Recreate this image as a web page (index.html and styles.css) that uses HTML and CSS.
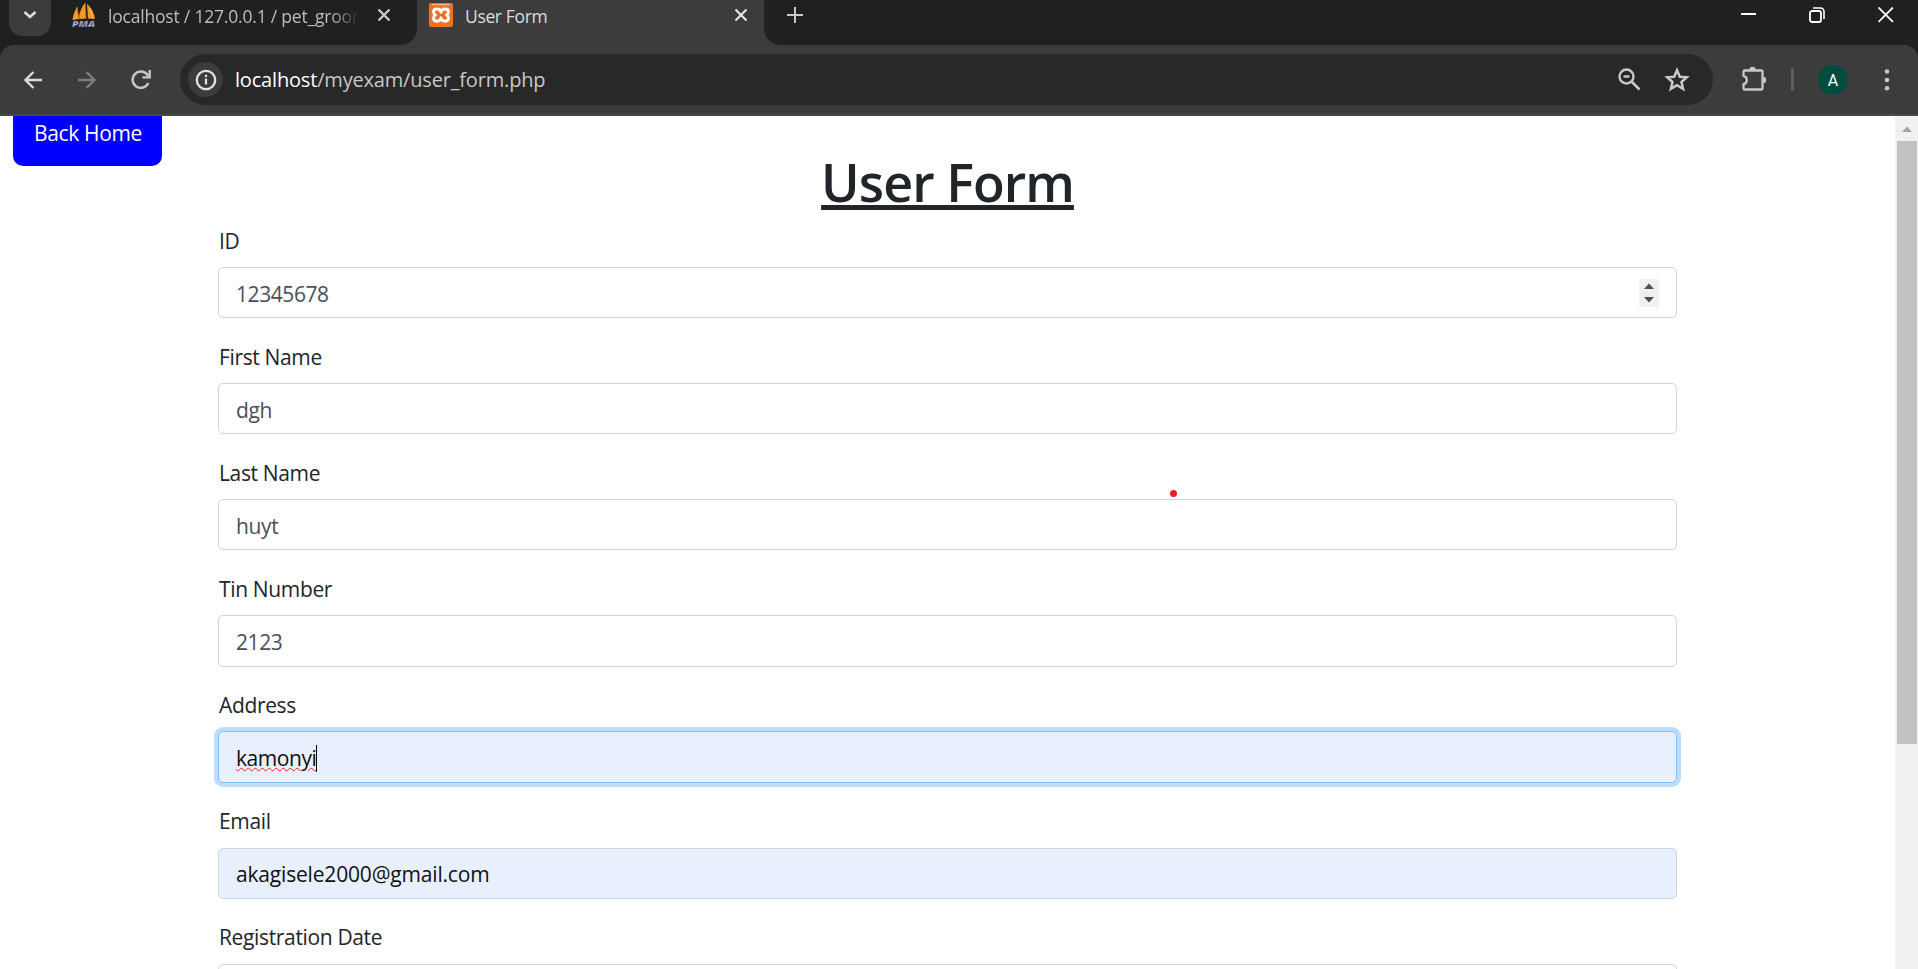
FILE: index.html
```html
<!DOCTYPE html>
<html lang="en">
<head>
<meta charset="utf-8">
<title>User Form</title>
<link rel="stylesheet" href="styles.css">
</head>
<body>
<div class="browser">
  <header class="tab-strip">
    <div class="tab-search"><svg width="42" height="36" viewBox="0 0 42 36"><path d="M15.500 12l5.500 5 5.500-5" fill="none" stroke="#dedede" stroke-width="2.600"/></svg></div>
    <div class="tab">
      <svg class="favicon" width="24" height="25" viewBox="0 0 24 25">
        <path d="M5 4C2.500 8 1 12 .5 17l6.500-1zM13 0C9 5 7 10 7 16l7-.5zM15 1c5 4 7 9 8 15l-7-.5z" fill="#f59a24"/>
        <path d="M5 4l2 12M13 0l1 15.500" stroke="#c96c12" stroke-width="1" fill="none"/>
        <path d="M18 5.500l3 9" stroke="#f9c069" stroke-width="1"/>
        <text x="0" y="23.500" class="pma" textLength="23" lengthAdjust="spacingAndGlyphs">PMA</text>
      </svg>
      <span class="tab-title tab-title-long">localhost / 127.0.0.1 / pet_groor</span>
      <svg class="tab-close" width="14" height="14" viewBox="0 0 14 14"><path d="M1.500 1.500l11 11M12.500 1.500l-11 11" stroke="#d0d0d0" stroke-width="2.200"/></svg>
    </div>
    <div class="tab tab-active">
      <svg class="favicon" width="24" height="24" viewBox="0 0 24 24">
        <rect width="24" height="24" rx="2" fill="#f27022"/><path d="M3 1.600h18" stroke="#fbb98a" stroke-width="1.200"/>
        <path d="M12 9.300C11.500 7 10 6 8 6S4.500 7.200 4.500 9c0 1.500.8 2.400 1.900 3-1.100.6-1.900 1.500-1.900 3.100C4.500 17 6 18.200 8 18.200s3.500-1 4-3.400c.5 2.400 2 3.400 4 3.400s3.500-1.200 3.500-3.100c0-1.600-.8-2.500-1.900-3.100 1.100-.6 1.900-1.500 1.900-3C19.500 7.200 18 6 16 6s-3.500 1-4 3.300z" fill="none" stroke="#fff" stroke-width="2.900" stroke-linejoin="round"/>
      </svg>
      <span class="tab-title">User Form</span>
      <svg class="tab-close" width="14" height="14" viewBox="0 0 14 14"><path d="M1.500 1.500l11 11M12.500 1.500l-11 11" stroke="#e6e6e6" stroke-width="2.200"/></svg>
    </div>
    <svg class="new-tab" width="16" height="16" viewBox="0 0 16 16"><path d="M8 0v16M0 8h16" stroke="#c8c8c8" stroke-width="2"/></svg>
    <div class="window-controls">
      <svg width="15" height="16" viewBox="0 0 15 16"><path d="M0 7h15" stroke="#fff" stroke-width="2"/></svg>
      <svg width="16" height="16" viewBox="0 0 16 16"><rect x="1" y="4" width="11" height="11" rx="2" fill="none" stroke="#fff" stroke-width="1.800"/><path d="M4 1h7.500A3.500 3.500 0 0 1 15 4.500V12" fill="none" stroke="#fff" stroke-width="1.600"/></svg>
      <svg width="16" height="16" viewBox="0 0 16 16"><path d="M.5.500l14.400 14.400M14.900.5L.5 14.900" stroke="#fff" stroke-width="1.800"/></svg>
    </div>
  </header>
  <div class="toolbar-wrap">
    <div class="toolbar">
      <svg class="nav" width="18" height="18" viewBox="0 0 18 18"><path d="M18 9H1.500M9.500 1L1.500 9l8 8" fill="none" stroke="#dcdcdc" stroke-width="2.300"/></svg>
      <svg class="nav nav-forward" width="18" height="18" viewBox="0 0 18 18"><path d="M0 9h16.500M8.500 1l8 8-8 8" fill="none" stroke="#7d7d7d" stroke-width="2.300"/></svg>
      <svg class="nav nav-reload" width="20" height="20" viewBox="0 0 20 20"><path d="M17.300 13A8.200 8.200 0 1 1 16.300 4.600L18 6.500" fill="none" stroke="#c8c8c8" stroke-width="2.500"/><path d="M18.700 0v7.300h-7.300" fill="none" stroke="#c8c8c8" stroke-width="2.300"/></svg>
      <div class="omnibox">
        <div class="site-info"><svg width="22" height="22" viewBox="0 0 22 22"><circle cx="11" cy="11" r="9.200" fill="none" stroke="#e3e3e3" stroke-width="2.300"/><path d="M11 9.500v6M11 5.800v2.300" stroke="#e3e3e3" stroke-width="2.200"/></svg></div>
        <span class="url"><b>localhost</b>/myexam/user_form.php</span>
        <svg class="zoom-out" width="23" height="23" viewBox="0 0 23 23"><circle cx="8.500" cy="8.500" r="7" fill="none" stroke="#c8c8c8" stroke-width="2.400"/><path d="M5.500 8.500h6M13.500 13.500l8 8" stroke="#c8c8c8" stroke-width="2.500"/></svg>
        <svg class="star" width="26" height="25" viewBox="0 0 26 25"><path d="M13 3.200l2.800 6.500 7 .6-5.300 4.700 1.600 6.900-6.100-3.700-6.100 3.700 1.600-6.900-5.300-4.700 7-.6z" fill="none" stroke="#c8c8c8" stroke-width="2.500"/></svg>
      </div>
      <svg class="extensions" width="26" height="26" viewBox="0 0 26 26"><path d="M3.500 4.500h17a1 1 0 0 1 1 1v17a1 1 0 0 1-1 1h-17a1 1 0 0 1-1-1v-4.300c2-.4 3.300-2 3.300-4.200s-1.300-3.800-3.300-4.200V5.500a1 1 0 0 1 1-1z" fill="none" stroke="#c8c8c8" stroke-width="2.300"/><path d="M8.300 4a3.200 3.200 0 0 1 6.400 0zM22 10.800a3.200 3.200 0 0 1 0 6.400z" fill="#c8c8c8"/></svg>
      <span class="divider"></span>
      <span class="avatar">A</span>
      <svg class="menu" width="6" height="22" viewBox="0 0 6 22"><g fill="#c8c8c8"><circle cx="3" cy="2.500" r="2.300"/><circle cx="3" cy="11" r="2.300"/><circle cx="3" cy="19.300" r="2.300"/></g></svg>
    </div>
  </div>
  <div class="viewport">
    <main class="page">
      <a class="back">Back Home</a>
      <h1 class="title">User Form</h1>
      <form class="form">
        <div class="group"><label class="label">ID</label><div class="control digits"><span>12345678</span><svg class="spinner" width="20" height="28" viewBox="0 0 20 28"><rect width="20" height="28" fill="#f0f0f0"/><path d="M5 10h10l-5-5.500zM5 18h10l-5 5.500z" fill="#505050"/></svg></div></div>
        <div class="group"><label class="label">First Name</label><div class="control">dgh</div></div>
        <div class="group"><label class="label">Last Name</label><div class="control">huyt<i class="pointer"></i></div></div>
        <div class="group"><label class="label">Tin Number</label><div class="control digits">2123</div></div>
        <div class="group"><label class="label">Address</label><div class="control filled focused"><span class="typed">kamonyi</span><i class="caret"></i></div></div>
        <div class="group"><label class="label">Email</label><div class="control filled email">akagisele2000@gmail.com</div></div>
        <div class="group"><label class="label label-date">Registration Date</label><div class="control"></div></div>
      </form>
    </main>
    <div class="scrollbar"><svg class="arrow" width="10" height="6" viewBox="0 0 10 6"><path d="M0 6h10L5 .5z" fill="#a3a3a3"/></svg><div class="thumb"></div></div>
  </div>
</div>
</body>
</html>
```
FILE: styles.css
```css
* { box-sizing: border-box; }
body { margin: 0; overflow: hidden; background: #fff; font-family: "Open Sans", "Noto Sans", sans-serif; }
svg { display: block; flex: none; }
.browser { display: flex; flex-direction: column; height: 969px; background: #1f2120; }

.tab-strip { display: flex; align-items: flex-start; height: 45px; flex: none; }
.tab-search { width: 42px; height: 36px; margin-left: 9px; background: #3c3c3c; border-radius: 0 0 14px 14px; }
.tab { display: flex; align-items: flex-start; height: 45px; width: 366px; padding-left: 21px; }
.favicon { margin-top: 3px; overflow: visible; }
.pma { font: italic 800 9.500px "Open Sans", sans-serif; fill: #c3c6dc; stroke: #34376b; stroke-width: .5px; }
.tab-title { margin: 3px 0 0 12px; width: 252px; font-size: 17.500px; line-height: 27px; letter-spacing: -.35px; color: #dcdcdc; white-space: nowrap; overflow: hidden; }
.tab-title-long { letter-spacing: -.2px; color: #bdbdbd; -webkit-mask-image: linear-gradient(90deg, #000 88%, transparent 100%); mask-image: linear-gradient(90deg, #000 88%, transparent 100%); }
.tab-close { margin: 8px 0 0 17px; }
.tab-active { width: 347px; padding-left: 12px; background: #3c3c3c; position: relative; }
.tab-active::before, .tab-active::after { content: ""; position: absolute; bottom: 0; width: 16px; height: 16px; }
.tab-active::before { right: 100%; background: radial-gradient(circle at 0 0, transparent 15.500px, #3c3c3c 16px); }
.tab-active::after { left: 100%; background: radial-gradient(circle at 100% 0, transparent 15.500px, #3c3c3c 16px); }
.new-tab { margin: 7px 0 0 23px; }
.window-controls { display: flex; gap: 53px; margin: 7px 24px 0 auto; }

.toolbar-wrap { flex: none; height: 71px; }
.toolbar { display: flex; align-items: center; height: 71px; padding: 0 28px 0 24px; background: #3c3c3c; border-bottom: 2px solid #484848; border-radius: 14px 14px 0 0; }
.nav-forward { margin-left: 36px; }
.nav-reload { margin-left: 35px; }
.omnibox { display: flex; align-items: center; width: 1533px; height: 51px; margin-left: 29px; padding: 0 23px 0 8px; background: #282828; border-radius: 26px; }
.site-info { display: flex; align-items: center; justify-content: center; width: 35px; height: 35px; border-radius: 50%; background: #3c3c3c; }
.url { flex: 1; margin-left: 12px; font-size: 20px; line-height: 30px; letter-spacing: -.18px; color: #c7c7c7; }
.url b { font-weight: 400; color: #fff; }
.star { margin-left: 23px; }
.extensions { margin-left: 28px; margin-top: -2px; }
.divider { width: 3px; height: 23px; margin-left: 24px; background: #5e5e5e; border-radius: 2px; }
.avatar { width: 30px; height: 30px; margin-left: 24px; border-radius: 50%; background: #004d40; color: #fff; font: 16px/31px Roboto, sans-serif; text-align: center; }
.menu { margin-left: auto; }

.viewport { display: flex; flex: 1; min-height: 0; background: #fff; }
.page { flex: 1; overflow: hidden; color: #212529; }
.back { display: block; width: 149px; height: 50px; margin-left: 13px; padding-left: 21px; border-radius: 0 0 10px 10px; background: #00f; color: #fff; font-size: 21px; line-height: 34px; letter-spacing: -.35px; }
.title { margin: 0; height: 57.800px; font-size: 52px; line-height: 32px; font-weight: 600; letter-spacing: -.95px; text-align: center; text-decoration: underline; text-decoration-thickness: 5px; text-underline-offset: 3px; }
.form { width: 1459px; margin-left: 218px; font-size: 21px; letter-spacing: -.35px; }
.group { margin-bottom: 21.750px; }
.label { display: block; height: 32.400px; margin-bottom: 10.700px; padding-left: 1px; line-height: 34.400px; }
.label-date { line-height: 33.600px; }
.control { position: relative; display: flex; align-items: center; height: 51.300px; padding: 2px 17px 0; border: 1px solid #ced4da; border-radius: 5px; color: #495057; }
.digits { letter-spacing: -.43px; }
.filled { background: #e8effd; color: #111; }
.email { letter-spacing: -.18px; }
.focused { border-color: #80bdff; box-shadow: 0 0 0 4px #bfdeff; letter-spacing: -.45px; }
.typed { text-decoration: underline wavy #e22 1px; }
.caret { width: 1px; height: 27px; background: #000; }
.spinner { margin: -2px 0 0 auto; }
.pointer { position: absolute; left: 951px; top: -10px; width: 7px; height: 7px; border-radius: 50%; background: #ed1c24; }
.scrollbar { width: 23px; background: #f0f0f0; }
.arrow { margin: 10px 0 9px 7px; }
.thumb { width: 20px; height: 603px; margin-left: 2px; background: #c1c1c1; }
```
